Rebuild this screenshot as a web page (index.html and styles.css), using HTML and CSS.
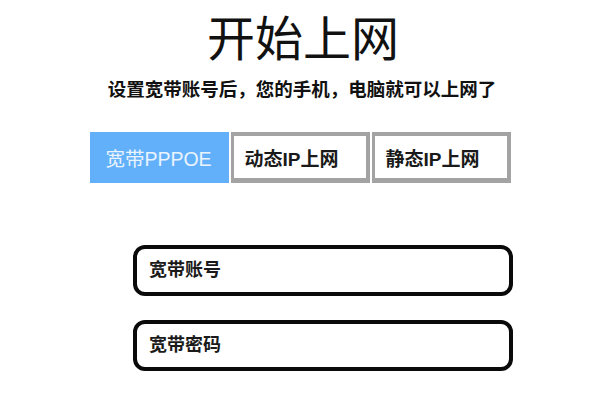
FILE: index.html
```html
<!DOCTYPE html>
<html lang="zh-CN">
<head>
    <meta charset="UTF-8">
    <meta name="viewport" content="width=device-width, initial-scale=1.0">
    <title>开始上网</title>
    <link rel="stylesheet" href="styles.css">
</head>
<body>
    <div class="setup">
        <h1 class="title">开始上网</h1>
        <p class="subtitle">设置宽带账号后，您的手机，电脑就可以上网了</p>
        <div class="tabs">
            <button class="tab active">宽带PPPOE</button>
            <button class="tab">动态IP上网</button>
            <button class="tab">静态IP上网</button>
        </div>
        <form class="fields">
            <input type="text" class="field" placeholder="宽带账号">
            <input type="password" class="field" placeholder="宽带密码">
        </form>
    </div>
</body>
</html>
```

FILE: styles.css
```css
body {
    margin: 0;
    padding: 0;
    background-color: #fff;
    color: #111;
    font-family: 'Liberation Sans', 'Noto Sans CJK SC', sans-serif;
}

.setup {
    width: 600px;
    display: flex;
    flex-direction: column;
    align-items: center;
}

.title {
    margin: 13px 0 0 6px;
    font-size: 48px;
    font-weight: 400;
    line-height: 54px;
}

.subtitle {
    margin: 11px 0 0 4px;
    font-size: 18.5px;
    font-weight: 700;
    line-height: 24px;
}

.tabs {
    display: flex;
    gap: 2px;
    margin-top: 30px;
}

.tab {
    width: 139px;
    height: 51px;
    box-sizing: border-box;
    background-color: #fff;
    border: 4px solid #a3a3a3;
    border-left-width: 3px;
    border-bottom-width: 5px;
    padding: 0 16px 0 0;
    font-family: inherit;
    font-size: 19px;
    font-weight: 700;
    color: #1a1a1a;
    cursor: pointer;
}

.tab.active {
    background-color: #62b0fa;
    border-color: #62b0fa;
    padding: 0;
    color: #eaf4fe;
    font-weight: 400;
    font-size: 19.5px;
}

.fields {
    display: flex;
    flex-direction: column;
    gap: 24px;
    margin: 62px 0 0 46px;
}

.field {
    width: 380px;
    height: 51px;
    box-sizing: border-box;
    border: 4px solid #0a0a0a;
    border-radius: 12px;
    padding: 0 12px;
    font-family: inherit;
    font-size: 18px;
    font-weight: 700;
    outline: none;
}

.field::placeholder {
    color: #1a1a1a;
    opacity: 1;
}
```
